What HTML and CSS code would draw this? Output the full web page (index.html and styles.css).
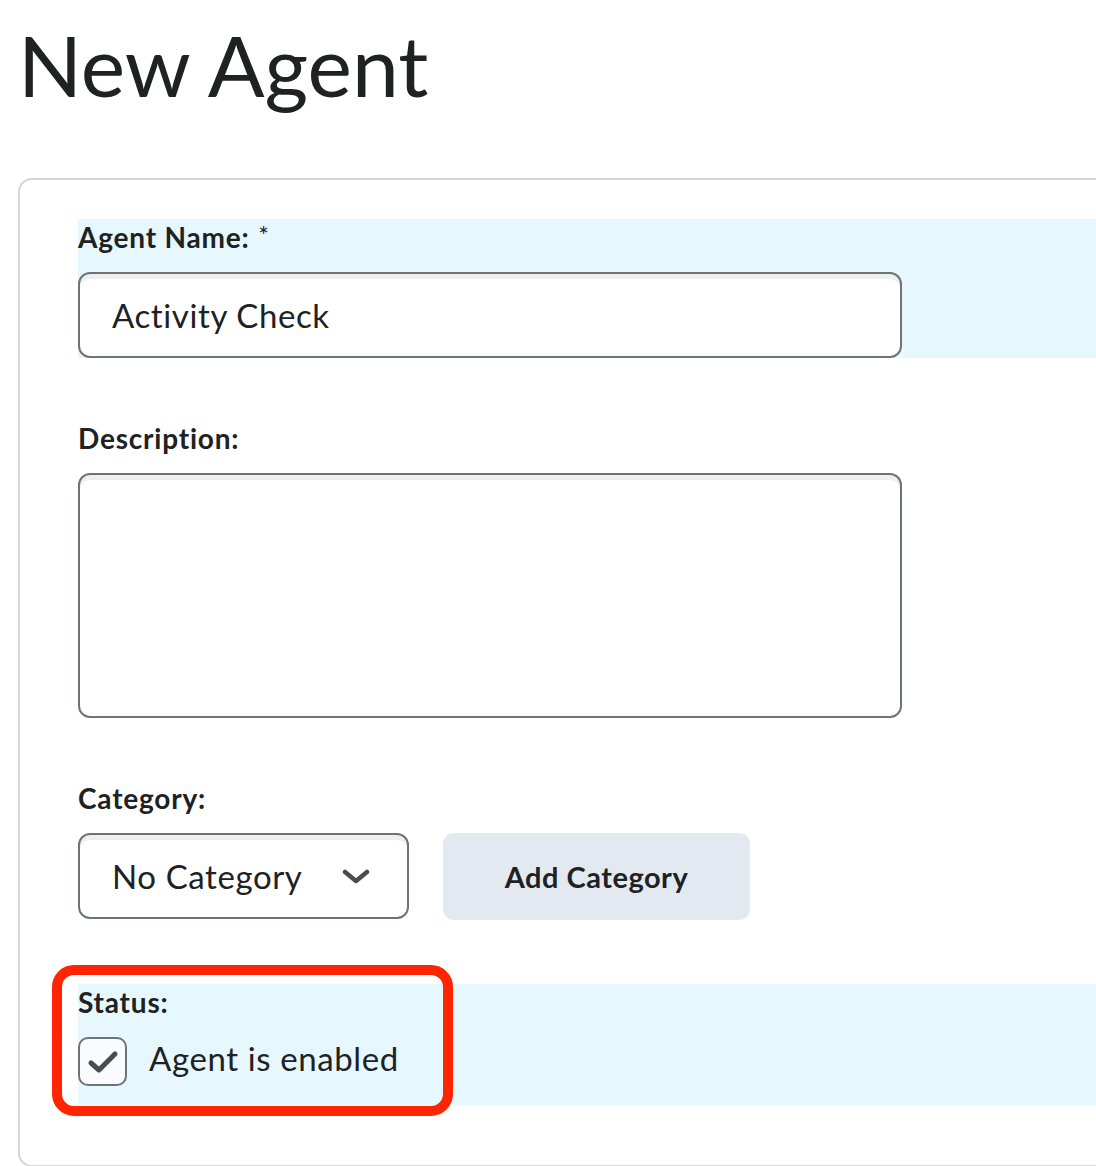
FILE: index.html
```html
<!DOCTYPE html>
<html lang="en">
<head>
<meta charset="utf-8">
<title>New Agent</title>
<link rel="stylesheet" href="styles.css">
</head>
<body>
<h1 class="page-title">New Agent</h1>
<div class="panel">
  <div class="field band">
    <label class="label">Agent Name: <span class="req">*</span></label>
    <div class="input">Activity Check</div>
  </div>
  <div class="field">
    <label class="label">Description:</label>
    <div class="textarea"></div>
  </div>
  <div class="field">
    <label class="label">Category:</label>
    <div class="row">
      <div class="select">
        <span>No Category</span>
        <svg class="chev" width="28" height="16" viewBox="0 0 28 16"><path d="M3 3 L14 12 L25 3" fill="none" stroke="#494c4e" stroke-width="4.5" stroke-linecap="round" stroke-linejoin="round"/></svg>
      </div>
      <div class="button">Add Category</div>
    </div>
  </div>
  <div class="field band status">
    <label class="label">Status:</label>
    <div class="check-row">
      <span class="checkbox">
        <svg width="32" height="26" viewBox="0 0 32 26"><path d="M4 14 L12 21 L28 5" fill="none" stroke="#494c4e" stroke-width="5" stroke-linecap="round" stroke-linejoin="round"/></svg>
      </span>
      <span class="check-text">Agent is enabled</span>
    </div>
    <div class="highlight"></div>
  </div>
</div>
</body>
</html>
```
FILE: styles.css
```css
html, body {
  margin: 0;
  padding: 0;
  overflow: hidden;
  background: #ffffff;
}
body {
  font-family: Lato, "Open Sans", sans-serif;
  color: #202122;
  width: 1096px;
  height: 1166px;
}
.page-title {
  font-size: 84px;
  font-weight: 400;
  line-height: 100px;
  margin: 15px 0 0 18px;
  letter-spacing: 0;
}
.panel {
  margin: 63px 0 0 18px;
  width: 1200px;
  border: 2px solid #d6d6d6;
  border-radius: 14px;
  padding: 39px 0 60px 58px;
}
.field {
  margin-top: 62px;
}
.field:first-child {
  margin-top: 0;
}
.band {
  background: #e6f7fe;
}
.label {
  display: block;
  font-size: 28px;
  font-weight: 700;
  line-height: 36px;
  letter-spacing: 0.8px;
  margin-bottom: 17px;
}
.req {
  font-weight: 400;
  font-size: 25px;
  line-height: 0;
  margin-left: 1px;
  position: relative;
  top: -3px;
}
.input, .textarea, .select {
  box-sizing: border-box;
  border: 2px solid #6e7376;
  border-radius: 12px;
  background: #fff;
  box-shadow: inset 0 5px 0 0 #eeeff0;
}
.input {
  width: 824px;
  height: 86px;
  padding: 0 32px;
  font-size: 33px;
  letter-spacing: 0.6px;
  line-height: 82px;
}
.textarea {
  width: 824px;
  height: 245px;
}
.row {
  display: flex;
  gap: 34px;
}
.select {
  width: 331px;
  height: 86px;
  display: flex;
  align-items: center;
  justify-content: space-between;
  padding: 0 37px 0 32px;
  font-size: 33px;
  letter-spacing: 0.6px;
}
.chev {
  display: block;
  margin-top: 2px;
}
.button {
  box-sizing: border-box;
  width: 307px;
  height: 87px;
  background: #e3e9f1;
  border-radius: 11px;
  display: flex;
  align-items: center;
  justify-content: center;
  font-size: 29px;
  letter-spacing: 0.5px;
  font-weight: 700;
}
.status {
  position: relative;
  margin-top: 64px;
  padding-bottom: 19px;
}
.check-row {
  display: flex;
  align-items: center;
  gap: 22px;
  margin-top: 2px;
}
.checkbox {
  box-sizing: border-box;
  width: 49px;
  height: 49px;
  border: 2px solid #6e7376;
  border-radius: 10px;
  background: #f9fbff;
  display: flex;
  align-items: center;
  justify-content: center;
}
.checkbox svg {
  display: block;
}
.check-text {
  font-size: 33px;
  letter-spacing: 0.6px;
  margin-bottom: 8px;
}
.highlight {
  position: absolute;
  left: -26px;
  top: -19px;
  width: 401px;
  height: 151px;
  box-sizing: border-box;
  border: 10px solid #ff2500;
  border-radius: 22px;
  pointer-events: none;
}
```
